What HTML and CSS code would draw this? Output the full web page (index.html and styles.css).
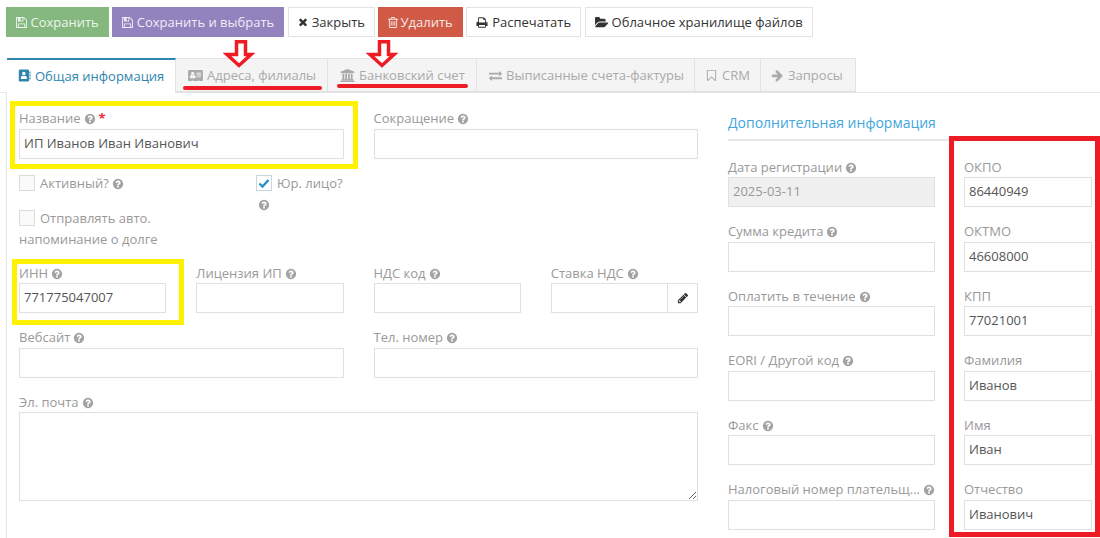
FILE: index.html
```html
<!DOCTYPE html>
<html lang="ru">
<head>
<meta charset="utf-8">
<title>Контрагент</title>
<link rel="stylesheet" href="styles.css">
</head>
<body>
<svg class="defs" aria-hidden="true">
  <symbol id="i-help" viewBox="0 0 1792 1792"><path d="M1024 1376v-192q0-14-9-23t-23-9h-192q-14 0-23 9t-9 23v192q0 14 9 23t23 9h192q14 0 23-9t9-23zm256-672q0-88-55.500-163t-138.500-116-170-41q-243 0-371 213-15 24 8 42l132 100q7 6 19 6 16 0 25-12 53-68 86-92 34-24 86-24 48 0 85.500 26t37.500 59q0 38-20 61t-68 45q-63 28-115.500 86.500t-52.500 125.500v36q0 14 9 23t23 9h192q14 0 23-9t9-23q0-19 21.500-49.500t54.500-49.500q32-18 49-28.500t46-35 44.500-48 28-60.500 12.500-81zm384 192q0 209-103 385.500t-279.500 279.500-385.500 103-385.500-103-279.500-279.500-103-385.500 103-385.500 279.500-279.500 385.500-103 385.500 103 279.500 279.500 103 385.500z"/></symbol>
  <symbol id="i-save" viewBox="128 128 1536 1536"><path d="M512 1536h768v-384h-768v384zm896 0h128v-896q0-14-10-38.500t-20-34.500l-281-281q-10-10-34-20t-39-10v416q0 40-28 68t-68 28h-576q-40 0-68-28t-28-68v-416h-128v1280h128v-416q0-40 28-68t68-28h832q40 0 68 28t28 68v416zm-384-928v-320q0-13-9.500-22.500t-22.500-9.500h-192q-13 0-22.500 9.500t-9.500 22.500v320q0 13 9.500 22.500t22.500 9.500h192q13 0 22.500-9.500t9.500-22.500zm640 32v928q0 40-28 68t-68 28h-1344q-40 0-68-28t-28-68v-1344q0-40 28-68t68-28h928q40 0 88 20t76 48l280 280q28 28 48 76t20 88z"/></symbol>
  <symbol id="i-times" viewBox="128 128 1536 1536"><path d="M1490 1322q0 40-28 68l-136 136q-28 28-68 28t-68-28l-294-294-294 294q-28 28-68 28t-68-28l-136-136q-28-28-28-68t28-68l294-294-294-294q-28-28-28-68t28-68l136-136q28-28 68-28t68 28l294 294 294-294q28-28 68-28t68 28l136 136q28 28 28 68t-28 68l-294 294 294 294q28 28 28 68z"/></symbol>
  <symbol id="i-trash" viewBox="192 128 1408 1536"><path d="M704 736v576q0 14-9 23t-23 9h-64q-14 0-23-9t-9-23v-576q0-14 9-23t23-9h64q14 0 23 9t9 23zm256 0v576q0 14-9 23t-23 9h-64q-14 0-23-9t-9-23v-576q0-14 9-23t23-9h64q14 0 23 9t9 23zm256 0v576q0 14-9 23t-23 9h-64q-14 0-23-9t-9-23v-576q0-14 9-23t23-9h64q14 0 23 9t9 23zm128 724v-948h-896v948q0 22 7 40.500t14.500 27 10.500 8.500h832q3 0 10.500-8.500t14.500-27 7-40.500zm-672-1076h448l-48-117q-7-9-17-11h-317q-10 2-17 11zm928 32v64q0 14-9 23t-23 9h-96v948q0 83-47 143.500t-113 60.500h-832q-66 0-113-58.500t-47-141.500v-952h-96q-14 0-23-9t-9-23v-64q0-14 9-23t23-9h309l70-167q15-37 54-63t79-26h320q40 0 79 26t54 63l70 167h309q14 0 23 9t9 23z"/></symbol>
  <symbol id="i-print" viewBox="0 128 1792 1536"><path d="M448 1536h896v-256h-896v256zm0-640h896v-384h-160q-40 0-68-28t-28-68v-160h-640v640zm1152 64q0-26-19-45t-45-19-45 19-19 45 19 45 45 19 45-19 19-45zm128 0v416q0 13-9.500 22.500t-22.500 9.500h-224v160q0 40-28 68t-68 28h-960q-40 0-68-28t-28-68v-160h-224q-13 0-22.500-9.500t-9.500-22.500v-416q0-79 56.500-135.500t135.500-56.500h64v-544q0-40 28-68t68-28h672q40 0 88 20t76 48l152 152q28 28 48 76t20 88v256h64q79 0 135.500 56.500t56.500 135.500z"/></symbol>
  <symbol id="i-folder" viewBox="0 0 1920 1792"><path d="M1815 952q0 31-31 66l-336 396q-43 51-120.500 86.500t-143.500 35.500h-1088q-34 0-60.500-13t-26.500-43q0-31 31-66l336-396q43-51 120.500-86.500t143.500-35.500h1088q34 0 60.500 13t26.500 43zm-343-344v160h-832q-94 0-197 47.500t-164 119.500l-337 396-5 6q0-4-.500-12.500t-.500-12.500v-960q0-92 66-158t158-66h320q92 0 158 66t66 158v32h544q92 0 158 66t66 158z"/></symbol>
  <symbol id="i-pencil" viewBox="0 0 1792 1792"><path d="M491 1536l91-91-235-235-91 91v107h128v128h107zm523-928q0-22-22-22-10 0-17 7l-542 542q-7 7-7 17 0 22 22 22 10 0 17-7l542-542q7-7 7-17zm-54-192l416 416-832 832h-416v-416zm683 96q0 53-37 90l-166 166-416-416 166-165q36-38 90-38 53 0 91 38l235 234q37 39 37 91z"/></symbol>
  <symbol id="i-bank" viewBox="0 0 1920 1792"><path d="M960 0l960 384v128h-128q0 26-20.500 45t-48.500 19h-1526q-28 0-48.500-19t-20.500-45h-128v-128zm-704 640h256v768h128v-768h256v768h128v-768h256v768h128v-768h256v768h59q28 0 48.500 19t20.500 45v64h-1664v-64q0-26 20.500-45t48.500-19h59v-768zm1595 960q28 0 48.500 19t20.500 45v128h-1920v-128q0-26 20.500-45t48.500-19h1782z"/></symbol>
  <symbol id="i-exchange" viewBox="0 0 1792 1792"><path d="M1792 1184v192q0 13-9.500 22.500t-22.500 9.500h-1376v192q0 13-9.500 22.500t-22.500 9.500q-12 0-24-10l-319-320q-9-9-9-22 0-14 9-23l320-320q9-9 23-9 13 0 22.500 9.500t9.500 22.500v192h1376q13 0 22.500 9.500t9.500 22.500zm0-544q0 14-9 23l-320 320q-9 9-23 9-13 0-22.500-9.500t-9.500-22.500v-192h-1376q-13 0-22.500-9.500t-9.500-22.500v-192q0-13 9.500-22.500t22.500-9.500h1376v-192q0-14 9-23t23-9q12 0 24 10l319 319q9 9 9 23z"/></symbol>
  <symbol id="i-bookmark" viewBox="0 0 1792 1792"><path d="M1420 128q23 0 44 9 33 13 52.500 41t19.500 62v1289q0 34-19.500 62t-52.500 41q-19 8-44 8-48 0-83-32l-441-424-441 424q-36 33-83 33-23 0-44-9-33-13-52.500-41t-19.500-62v-1289q0-34 19.500-62t52.500-41q21-9 44-9h1048zm-20 128h-1008v1229l504-483 504 483v-1229z" fill-rule="evenodd"/></symbol>
  <symbol id="i-arrow" viewBox="0 0 1792 1792"><path d="M1600 960q0 54-37 91l-651 651q-39 37-91 37-51 0-90-37l-75-75q-38-38-38-91t38-91l293-293h-704q-52 0-84.500-37.500t-32.500-90.500v-128q0-53 32.500-90.500t84.500-37.500h704l-293-294q-38-36-38-90t38-90l75-75q38-38 90-38 53 0 91 38l651 651q37 35 37 90z"/></symbol>
  <symbol id="i-card" viewBox="0 0 2048 1792"><path d="M1024 1131q0-64-9-117.500t-29.500-103-60.500-78-97-28.500q-6 4-30 18t-37.500 21.500-35.500 17.500-43 14.500-42 4.500-42-4.500-43-14.500-35.500-17.500-37.500-21.500-30-18q-57 0-97 28.500t-60.500 78-29.500 103-9 117.500 37 106.500 91 42.500h512q54 0 91-42.500t37-106.500zm-157-520q0-94-66.500-160.500t-160.500-66.500-160.500 66.500-66.500 160.500 66.500 160.500 160.500 66.500 160.500-66.500 66.500-160.500zm925 509v-64q0-14-9-23t-23-9h-576q-14 0-23 9t-9 23v64q0 14 9 23t23 9h576q14 0 23-9t9-23zm0-260v-56q0-15-10.500-25.500t-25.500-10.500h-568q-15 0-25.500 10.500t-10.500 25.500v56q0 15 10.500 25.500t25.500 10.500h568q15 0 25.500-10.500t10.500-25.500zm0-252v-64q0-14-9-23t-23-9h-576q-14 0-23 9t-9 23v64q0 14 9 23t23 9h576q14 0 23-9t9-23zm256-320v1216q0 66-47 113t-113 47h-352v-96q0-14-9-23t-23-9h-64q-14 0-23 9t-9 23v96h-768v-96q0-14-9-23t-23-9h-64q-14 0-23 9t-9 23v96h-352q-66 0-113-47t-47-113v-1216q0-66 47-113t113-47h1728q66 0 113 47t47 113z"/></symbol>
  <symbol id="i-abook" viewBox="0 0 16 16"><path fill-rule="evenodd" d="M2.500 0.500h9.500a1.500 1.500 0 0 1 1.500 1.500v12a1.500 1.500 0 0 1-1.500 1.500h-9.500a1.500 1.500 0 0 1-1.500-1.500v-12a1.500 1.500 0 0 1 1.500-1.500zM7.200 3.500a2.100 2.100 0 1 0 0 4.200 2.100 2.100 0 0 0 0-4.200zM3.600 12.200h7.200c.2-2.300-.8-3.800-2-3.800-.5.300-1 .5-1.600.5s-1.100-.2-1.600-.5c-1.200 0-2.200 1.500-2 3.800z"/><path d="M14 3h1.500v2.400h-1.500zM14 6.800h1.500v2.400h-1.500zM14 10.600h1.500v2.400h-1.500z"/></symbol>
  <symbol id="i-down" viewBox="0 0 32 28"><polygon points="13.500,1.750 22.500,1.750 22.500,14.500 28,14.500 16,25.500 4,14.500 13.500,14.500" fill="#fff" stroke="#ed1c24" stroke-width="3.500"/></symbol>
</svg>

<div class="page">
  <nav class="toolbar">
    <button class="btn btn-green"><svg class="ico"><use href="#i-save"/></svg>Сохранить</button>
    <button class="btn btn-purple"><svg class="ico"><use href="#i-save"/></svg>Сохранить и выбрать</button>
    <button class="btn"><svg class="ico ico-times"><use href="#i-times"/></svg>Закрыть</button>
    <button class="btn btn-red"><svg class="ico ico-trash"><use href="#i-trash"/></svg>Удалить</button>
    <button class="btn"><svg class="ico ico-print"><use href="#i-print"/></svg>Распечатать</button>
    <button class="btn"><svg class="ico ico-folder"><use href="#i-folder"/></svg>Облачное хранилище файлов</button>
  </nav>

  <ul class="tabs">
    <li class="tab tab-active"><svg class="tab-ico"><use href="#i-abook"/></svg>Общая информация</li>
    <li class="tab tab-2"><svg class="tab-ico tab-ico-wide"><use href="#i-card"/></svg>Адреса, филиалы</li>
    <li class="tab tab-3"><svg class="tab-ico tab-ico-wide"><use href="#i-bank"/></svg>Банковский счет</li>
    <li class="tab tab-4"><svg class="tab-ico"><use href="#i-exchange"/></svg>Выписанные счета-фактуры</li>
    <li class="tab tab-5"><svg class="tab-ico"><use href="#i-bookmark"/></svg>CRM</li>
    <li class="tab tab-6"><svg class="tab-ico"><use href="#i-arrow"/></svg>Запросы</li>
  </ul>

  <div class="panel">
    <section class="main">
      <div class="row row-2">
        <div class="field">
          <label class="lbl">Название<svg class="help"><use href="#i-help"/></svg><span class="req">*</span></label>
          <input class="inp" value="ИП Иванов Иван Иванович">
        </div>
        <div class="field">
          <label class="lbl">Сокращение<svg class="help"><use href="#i-help"/></svg></label>
          <input class="inp">
        </div>
      </div>

      <div class="checks">
        <div class="checks-left">
          <div class="check"><span class="box"></span>Активный?<svg class="help"><use href="#i-help"/></svg></div>
          <div class="check"><span class="box"></span>Отправлять авто. напоминание о долге</div>
        </div>
        <div class="check check-narrow"><span class="box box-on"><svg viewBox="0 0 14 14"><path d="M2.500 7.500l3 3 6-6.500" fill="none" stroke="#2c8fc9" stroke-width="2.400"/></svg></span>Юр. лицо? <svg class="help help-wrap"><use href="#i-help"/></svg></div>
      </div>

      <div class="row row-4">
        <div class="field">
          <label class="lbl">ИНН<svg class="help"><use href="#i-help"/></svg></label>
          <input class="inp" value="771775047007">
        </div>
        <div class="field">
          <label class="lbl">Лицензия ИП<svg class="help"><use href="#i-help"/></svg></label>
          <input class="inp">
        </div>
        <div class="field">
          <label class="lbl">НДС код<svg class="help"><use href="#i-help"/></svg></label>
          <input class="inp">
        </div>
        <div class="field">
          <label class="lbl">Ставка НДС<svg class="help"><use href="#i-help"/></svg></label>
          <div class="group">
            <input class="inp group-inp">
            <span class="addon"><svg class="ico-pencil"><use href="#i-pencil"/></svg></span>
          </div>
        </div>
      </div>

      <div class="row row-2">
        <div class="field">
          <label class="lbl">Вебсайт<svg class="help"><use href="#i-help"/></svg></label>
          <input class="inp">
        </div>
        <div class="field">
          <label class="lbl">Тел. номер<svg class="help"><use href="#i-help"/></svg></label>
          <input class="inp">
        </div>
      </div>

      <div class="field">
        <label class="lbl">Эл. почта<svg class="help"><use href="#i-help"/></svg></label>
        <textarea class="inp area"></textarea>
      </div>
    </section>

    <aside class="side">
      <h3 class="side-title">Дополнительная информация</h3>
      <div class="side-cols">
        <div class="side-col">
          <div class="field">
            <label class="lbl">Дата регистрации<svg class="help"><use href="#i-help"/></svg></label>
            <input class="inp inp-off" value="2025-03-11" readonly>
          </div>
          <div class="field">
            <label class="lbl">Сумма кредита<svg class="help"><use href="#i-help"/></svg></label>
            <input class="inp">
          </div>
          <div class="field">
            <label class="lbl">Оплатить в течение<svg class="help"><use href="#i-help"/></svg></label>
            <input class="inp">
          </div>
          <div class="field">
            <label class="lbl">EORI / Другой код<svg class="help"><use href="#i-help"/></svg></label>
            <input class="inp">
          </div>
          <div class="field">
            <label class="lbl">Факс<svg class="help"><use href="#i-help"/></svg></label>
            <input class="inp">
          </div>
          <div class="field">
            <label class="lbl">Налоговый номер плательщ...<svg class="help"><use href="#i-help"/></svg></label>
            <input class="inp">
          </div>
        </div>
        <div class="side-col">
          <div class="field"><label class="lbl">ОКПО</label><input class="inp" value="86440949"></div>
          <div class="field"><label class="lbl">ОКТМО</label><input class="inp" value="46608000"></div>
          <div class="field"><label class="lbl">КПП</label><input class="inp" value="77021001"></div>
          <div class="field"><label class="lbl">Фамилия</label><input class="inp" value="Иванов"></div>
          <div class="field"><label class="lbl">Имя</label><input class="inp" value="Иван"></div>
          <div class="field"><label class="lbl">Отчество</label><input class="inp" value="Иванович"></div>
        </div>
      </div>
    </aside>
  </div>

  <div class="mark mark-y1"></div>
  <div class="mark mark-y2"></div>
  <div class="mark mark-r"></div>
  <svg class="arrow arrow-1"><use href="#i-down"/></svg>
  <svg class="arrow arrow-2"><use href="#i-down"/></svg>
  <div class="uline uline-1"></div>
  <div class="uline uline-2"></div>
</div>
</body>
</html>
```
FILE: styles.css
```css
* { box-sizing: border-box; }
html, body { margin: 0; height: 100%; }
body {
  font-family: "Open Sans", "Noto Sans", sans-serif;
  font-size: 13px;
  color: #555;
  background: #fff;
  overflow: hidden;
}
.defs { position: absolute; width: 0; height: 0; }
.page { position: relative; display: flex; flex-direction: column; height: 538px; }

/* toolbar */
.toolbar { display: flex; gap: 3.500px; padding: 7px 0 0 6px; height: 37px; }
.btn {
  display: inline-flex; align-items: center;
  height: 30px; padding: 0 9px;
  font: inherit; color: #333;
  background: #fff;
  border: 1px solid #e3e3e3;
  white-space: nowrap;
}
.btn-green { background: #84b87f; border-color: #84b87f; color: #eef5ec; }
.btn-purple { background: #9282bd; border-color: #9282bd; color: #f0edf6; }
.btn-red { background: #d05a46; border-color: #d05a46; color: #f8e9e6; }
.ico { width: 11px; height: 11px; margin-right: 3.500px; fill: currentColor; flex: none; }
.ico-times { width: 10px; height: 10px; margin-right: 4px; }
.ico-trash { width: 10px; height: 11px; margin-right: 2px; }
.ico-print { width: 12px; height: 11px; margin-right: 4px; }
.ico-folder { width: 14px; height: 13px; margin-right: 3px; }

/* tabs */
.tabs {
  display: flex; list-style: none;
  margin: 21px 0 0; padding: 0 0 0 7px;
  height: 35px;
  border-bottom: 1px solid #e8e8e8;
}
.tab {
  display: flex; align-items: center;
  height: 35px; padding-left: 12px;
  background: #f4f4f4;
  color: #aaa;
  border: 1px solid #e2e2e2;
  border-left: 0;
  border-bottom-width: 2px;
  white-space: nowrap;
}
.tab-ico { width: 13px; height: 13px; margin-right: 4px; fill: currentColor; flex: none; }
.tab-ico-wide { width: 15px; }
.tab-active {
  width: 169px; padding: 0 0 2px 11px;
  color: #2f86ad;
  background: #fff;
  border: 0;
  border-top: 2px solid #2f86ad;
  border-right: 1px solid #e2e2e2;
}
.tab-2 { width: 152px; }
.tab-3 { width: 149px; }
.tab-4 { width: 218px; }
.tab-5 { width: 66px; padding-left: 10px; }
.tab-6 { width: 95px; padding-left: 10px; }

/* panel */
.panel {
  flex: 1;
  display: flex; gap: 30px;
  margin-left: 6px;
  padding: 16px 0 0 12px;
  border-left: 1px solid #e5e5e5;
}
.main { width: 679px; flex: none; }
.row { display: grid; column-gap: 30px; }
.row-2 { grid-template-columns: 1fr 1fr; }
.row-4 { grid-template-columns: repeat(4, 1fr); }
.field { margin-bottom: 15px; min-width: 0; }
.lbl {
  display: block; height: 19.500px; line-height: 18px;
  color: #999; white-space: nowrap;
}
.help { width: 12px; height: 12px; margin-left: 3px; fill: #a3a3a3; vertical-align: -2px; }
.req { color: #e8303a; margin-left: 3px; font-weight: 700; }
.inp {
  display: block; width: 100%; height: 30px;
  padding: 0 4px 2px;
  font: inherit; color: #555;
  background: #fff;
  border: 1px solid #e0e0e0;
  border-radius: 0; outline: 0;
}
.inp-off { background: #f0f0f0; color: #999; }
.area { height: 89px; resize: vertical; }
.group { display: flex; }
.group-inp { flex: 1; min-width: 0; border-right: 0; }
.addon {
  display: flex; align-items: center; justify-content: center;
  flex: none; width: 31px; height: 30px;
  border: 1px solid #e0e0e0;
}
.ico-pencil { width: 12px; height: 12px; fill: #333; }

/* checkboxes */
.checks { display: flex; height: 91px; margin-top: -1px; }
.checks-left { width: 237px; padding-right: 27px; display: flex; flex-direction: column; gap: 14px; }
.check { color: #999; line-height: 21px; }
.check-narrow { width: 88px; }
.box {
  display: inline-block; width: 16px; height: 16px;
  margin-right: 5px; vertical-align: -3px;
  background: #fafafa;
  border: 1px solid #dcdcdc;
}
.box-on { background: #fff; border-color: #c8d6e0; }
.box-on svg { display: block; width: 14px; height: 14px; }
.help-wrap { margin-left: 2px; }

/* side */
.side { width: 364px; flex: none; }
.side-title {
  margin: 0 0 16.500px; height: 32px;
  font-size: 14px; font-weight: 400; line-height: 28px;
  color: #41a7dd;
  border-bottom: 2px solid #e8e8e8;
}
.side-cols { display: grid; grid-template-columns: 207px 128px; column-gap: 29px; }

/* annotations lying over the screenshot */
.mark { position: absolute; pointer-events: none; }
.mark-y1 { left: 10px; top: 101px; width: 348px; height: 68px; border: 5px solid #fff200; }
.mark-y2 { left: 12px; top: 259px; width: 172px; height: 66px; border: 5px solid #fff200; }
.mark-r { left: 949px; top: 136px; width: 151px; height: 401px; border: 5px solid #ed1c24; }
.arrow { position: absolute; width: 32px; height: 28px; top: 40px; }
.arrow-1 { left: 223px; }
.arrow-2 { left: 366px; }
.uline { position: absolute; height: 4px; border-radius: 2px; background: #ed1c24; }
.uline-1 { left: 183px; top: 86px; width: 139px; }
.uline-2 { left: 337px; top: 84px; width: 131px; }
```
